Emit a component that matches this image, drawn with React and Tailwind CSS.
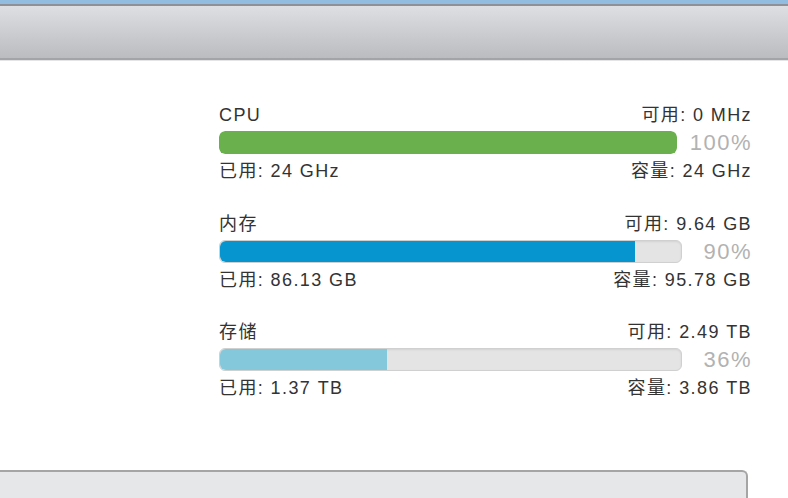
export default function App() {
  const rows = [
    { name: "CPU", free: "可用: 0 MHz", used: "已用: 24 GHz", cap: "容量: 24 GHz", pct: 100, color: "bg-[#6ab04c]", w: 458, tw: 458, mt: "mt-0" },
    { name: "内存", free: "可用: 9.64 GB", used: "已用: 86.13 GB", cap: "容量: 95.78 GB", pct: 90, color: "bg-[#0795cf]", w: 415, tw: 463, mt: "mt-[33px]" },
    { name: "存储", free: "可用: 2.49 TB", used: "已用: 1.37 TB", cap: "容量: 3.86 TB", pct: 36, color: "bg-[#84c8dc]", w: 167, tw: 463, mt: "mt-[32px]" },
  ];
  return (
    <div className="w-[788px] h-[498px] overflow-hidden bg-white flex flex-col text-[#333] font-['Liberation_Sans','Noto_Sans_CJK_SC',sans-serif]">
      <div className="h-[4px] bg-[#93bde0] shrink-0" />
      <div className="h-[2px] bg-[#8f9196] shrink-0" />
      <div className="h-[52px] bg-gradient-to-b from-[#dedfe2] to-[#bbbcc0] shrink-0" />
      <div className="h-[2px] bg-[#a3a4a8] shrink-0" />
      <div className="h-[1px] bg-[#e4e4e4] shrink-0" />
      <div className="flex-1 flex flex-col pl-[219px] pt-[44px]">
        {rows.map((r) => (
          <div key={r.name} className={`w-[533px] flex flex-col ${r.mt}`}>
            <div className="flex justify-between text-[18px] leading-[20px] h-[20px] tracking-[1.4px]">
              <span>{r.name}</span>
              <span>{r.free}</span>
            </div>
            <div className="flex items-center justify-between mt-[6px] h-[23px]">
              <div
                className={`h-[23px] rounded-[6px] overflow-hidden ${r.pct === 100 ? "" : "bg-[#e4e4e4] border border-[#d0d0d0] shadow-[inset_0_1px_2px_rgba(0,0,0,0.08)]"}`}
                style={{ width: r.tw }}
              >
                <div className={`h-full ${r.color} ${r.pct === 100 ? "rounded-[6px]" : "rounded-l-[6px]"}`} style={{ width: r.w }} />
              </div>
              <span className="text-[22px] leading-[23px] text-[#b2b2b2] tracking-[1.5px]">{r.pct}%</span>
            </div>
            <div className="flex justify-between text-[18px] leading-[20px] h-[20px] mt-[7px] tracking-[1.4px]">
              <span>{r.used}</span>
              <span>{r.cap}</span>
            </div>
          </div>
        ))}
      </div>
      <div className="h-[28px] shrink-0 flex">
        <div className="w-[748px] h-full bg-[#e6e7e9] border-t-2 border-r-2 border-[#a5a5a5] rounded-tr-[6px]" />
      </div>
    </div>
  );
}
